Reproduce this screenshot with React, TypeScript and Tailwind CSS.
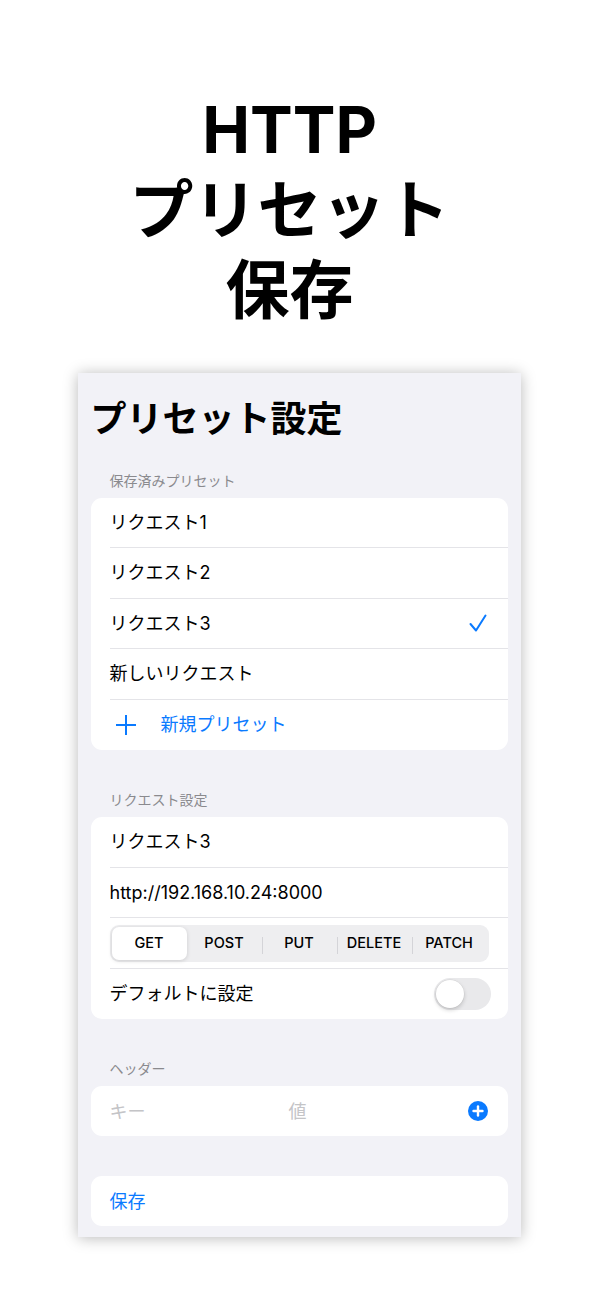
import React from "react";

function Row({ children, last }: { children: React.ReactNode; last?: boolean }) {
  return (
    <div className="h-[50.5px] pl-[19px] flex">
      <div
        className={
          last
            ? "flex-1 flex items-center pr-[20px]"
            : "flex-1 flex items-center pr-[20px] border-b border-[#e4e4e8]"
        }
      >
        {children}
      </div>
    </div>
  );
}

function SectionHeader({ children }: { children: React.ReactNode }) {
  return (
    <div className="mt-[40px] mb-[7px] h-[20px] pl-[19px] flex items-center text-[14px] leading-[20px] text-[#8a8a8e]">
      {children}
    </div>
  );
}

function Check() {
  return (
    <svg width="18" height="18" viewBox="0 0 18 18" fill="none" className="ml-auto mr-[1px]">
      <polyline points="1.5,10 7,16.5 16.5,1.5" stroke="#0a7aff" strokeWidth="2" strokeLinecap="round" strokeLinejoin="round" />
    </svg>
  );
}

function PlusThin() {
  return (
    <svg width="22" height="22" viewBox="0 0 22 22" fill="none">
      <line x1="11" y1="1" x2="11" y2="21" stroke="#0a7aff" strokeWidth="2" />
      <line x1="1" y1="11" x2="21" y2="11" stroke="#0a7aff" strokeWidth="2" />
    </svg>
  );
}

function PlusCircle() {
  return (
    <svg width="20" height="20" viewBox="0 0 20 20">
      <circle cx="10" cy="10" r="10" fill="#0a7aff" />
      <line x1="10" y1="5.5" x2="10" y2="14.5" stroke="#fff" strokeWidth="2.4" strokeLinecap="round" />
      <line x1="5.5" y1="10" x2="14.5" y2="10" stroke="#fff" strokeWidth="2.4" strokeLinecap="round" />
    </svg>
  );
}

function Segmented() {
  const items = ["GET", "POST", "PUT", "DELETE", "PATCH"];
  return (
    <div className="h-[37px] w-full bg-[#eeeef0] rounded-[9px] p-[2px] flex">
      {items.map((it, i) =>
        i === 0 ? (
          <div
            key={it}
            className="flex-1 flex items-center justify-center bg-white rounded-[7px] shadow-[0_1px_4px_rgba(0,0,0,0.14)] text-[14.5px] font-medium text-black"
          >
            {it}
          </div>
        ) : (
          <div key={it} className="flex-1 relative flex items-center justify-center text-[14.5px] font-medium text-black">
            {i > 1 ? (
              <span className="absolute left-0 top-[10px] w-px h-[17px] bg-[#d4d4d8]" />
            ) : null}
            {it}
          </div>
        )
      )}
    </div>
  );
}

function Toggle() {
  return (
    <div className="ml-auto w-[57px] h-[32px] rounded-full bg-[#e9e9eb] p-[2px] flex items-center">
      <div className="w-[28px] h-[28px] rounded-full bg-white shadow-[0_2px_4px_rgba(0,0,0,0.18),0_0_0_0.5px_rgba(0,0,0,0.06)]" />
    </div>
  );
}

export default function App() {
  return (
    <div className="w-[598px] h-[1300px] bg-white flex flex-col items-center font-['Inter','Noto_Sans_CJK_JP',sans-serif] text-black">
      <h1 className="mt-[90px] mr-[19px] text-[64px] leading-[80px] font-bold text-center">
        HTTP
        <br />
        プリセット
        <br />
        保存
      </h1>

      <div className="mt-[43px] w-[443px] h-[864px] bg-[#f2f2f7] shadow-[0_1px_14px_rgba(0,0,0,0.28)] overflow-hidden px-[13px] pt-[24px] flex flex-col">
        <div className="h-[44px] flex items-center text-[36px] leading-[44px] font-bold">プリセット設定</div>

        <div className="mt-[29.5px] mb-[7px] h-[20px] pl-[19px] flex items-center text-[14px] leading-[20px] text-[#8a8a8e]">
          保存済みプリセット
        </div>
        <div className="bg-white rounded-[11px] flex flex-col text-[18px]">
          <Row>リクエスト1</Row>
          <Row>リクエスト2</Row>
          <Row>
            <span>リクエスト3</span>
            <Check />
          </Row>
          <Row>新しいリクエスト</Row>
          <Row last>
            <div className="flex items-center text-[#0a7aff]">
              <div className="ml-[5px]">
                <PlusThin />
              </div>
              <span className="ml-[24px]">新規プリセット</span>
            </div>
          </Row>
        </div>

        <SectionHeader>リクエスト設定</SectionHeader>
        <div className="bg-white rounded-[11px] flex flex-col text-[18px]">
          <Row>リクエスト3</Row>
          <Row>http://192.168.10.24:8000</Row>
          <div className="h-[50.5px] flex flex-col">
            <div className="flex-1 flex items-center px-[19px] pt-[1px]">
              <Segmented />
            </div>
            <div className="ml-[19px] border-b border-[#e4e4e8]" />
          </div>
          <div className="h-[50.5px] pl-[19px] pr-[17px] flex items-center">
            <span>デフォルトに設定</span>
            <Toggle />
          </div>
        </div>

        <SectionHeader>ヘッダー</SectionHeader>
        <div className="bg-white rounded-[11px] h-[50px] pl-[19px] pr-[20px] flex items-center text-[18px]">
          <span className="w-[179px] text-[#c4c4c7]">キー</span>
          <span className="text-[#c4c4c7]">値</span>
          <div className="ml-auto">
            <PlusCircle />
          </div>
        </div>

        <div className="mt-[40px] bg-white rounded-[11px] h-[50px] pl-[19px] flex items-center text-[18px] text-[#0a7aff]">
          保存
        </div>
      </div>
    </div>
  );
}
